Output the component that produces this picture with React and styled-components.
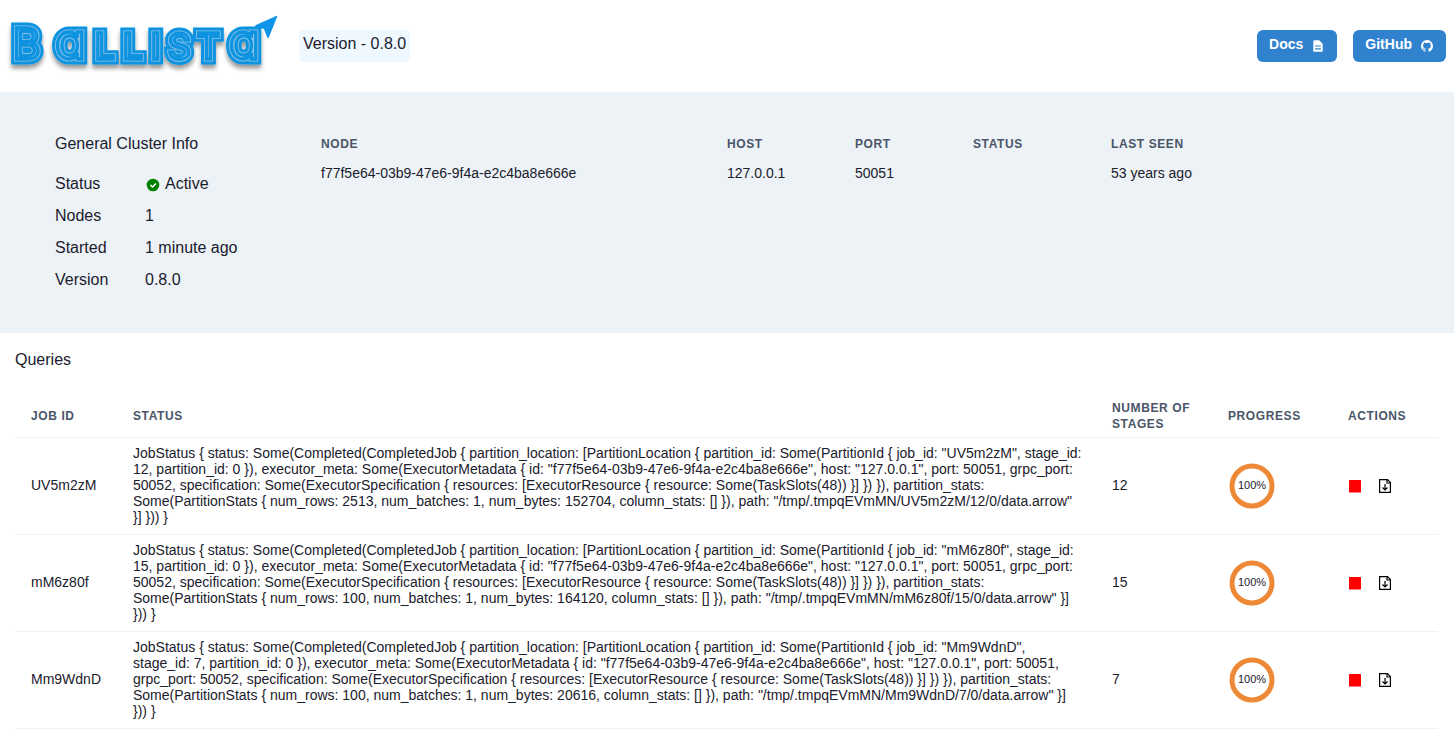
import React from "react";
import styled, { createGlobalStyle } from "styled-components";
import { VscGithubInverted } from "react-icons/vsc";

const Global = createGlobalStyle`
  *, *::before, *::after { box-sizing: border-box; }
  body {
    margin: 0;
    background: #fff;
    color: #1a202c;
    font: 16px/24px "Liberation Sans", Arial, sans-serif;
  }
`;

const Header = styled.header`
  display: flex;
  align-items: center;
  height: 92px;
  padding: 0 8px;
`;

const Logo = styled.svg`
  flex: none;
  margin-right: 15px;
  overflow: visible;
`;

const LogoText = styled.text`
  font-family: Inter, sans-serif;
  font-weight: 400;
  font-feature-settings: "cv11";
  fill: ${(p) => p.$fill};
  stroke: ${(p) => p.$stroke};
  stroke-width: ${(p) => p.$width}px;
`;

const VersionTag = styled.div`
  height: 32px;
  padding: 2px 4px;
  border-radius: 4px;
  background: #f0f8ff;
`;

const Links = styled.nav`
  display: flex;
  gap: 16px;
  margin-left: auto;
`;

const LinkButton = styled.a`
  display: flex;
  align-items: center;
  gap: 8px;
  height: 32px;
  padding: 0 12px;
  border-radius: 6px;
  background: #3182ce;
  color: #fff;
  font-size: 14px;
  font-weight: 700;
  line-height: 16px;
  text-decoration: none;

  span { padding-bottom: 4px; }
`;

const GithubIcon = styled(VscGithubInverted)`
  width: 14px;
  height: 14px;
  padding: 1px;
`;

const Cluster = styled.section`
  display: grid;
  grid-template-columns: 250px 1fr;
  align-items: start;
  padding: 40px 201px 41px 55px;
  background: #edf2f7;
`;

const Title = styled.h2`
  margin: 0;
  font-size: 16px;
  font-weight: 400;
`;

const Facts = styled.dl`
  display: grid;
  grid-template-columns: 90px 1fr;
  row-gap: 8px;
  margin: 16px 0 0;

  dd {
    display: flex;
    align-items: center;
    gap: 4px;
    margin: 0;
  }
`;

const Table = styled.table`
  width: 100%;
  border-collapse: collapse;
  font-size: 14px;
  line-height: ${(p) => p.$line}px;
`;

const Th = styled.th`
  width: ${(p) => p.$width || "auto"};
  padding: 4px 16px;
  color: #4a5568;
  font-size: 12px;
  font-weight: 700;
  line-height: 16px;
  letter-spacing: 0.05em;
  text-align: left;
  text-transform: uppercase;
`;

const Td = styled.td`
  padding: 7px 14px 9px 16px;
`;

const WidgetTd = styled.td`
  padding: 8px 16px;
`;

const Queries = styled.section`
  padding: 15px 16px 0 15px;

  ${Table} { margin-top: 24px; }
  ${Th} { padding-bottom: 5px; }
  tr { border-bottom: 1px solid #edf2f7; }
`;

const Ring = styled.svg`
  display: block;
`;

const Actions = styled.div`
  display: flex;
  gap: 16px;
`;

const IconButton = styled.button`
  display: block;
  padding: 0;
  border: 0;
  background: none;
  cursor: pointer;

  svg { display: block; }
`;

const blue = "#0d93e0";
const pale = "#8cc2e6";

const layers = [
  { width: 11, stroke: blue, fill: blue },
  { width: 5, stroke: pale, fill: pale },
  { width: 3.3, stroke: blue, fill: pale },
];

function BallistaLogo() {
  return (
    <Logo width="276" height="72" viewBox="0 0 276 72" role="img" aria-label="Ballista">
      <defs>
        <filter id="shadow" x="-10%" y="-20%" width="120%" height="160%">
          <feDropShadow dx="0" dy="4" stdDeviation="2" floodColor="#000" floodOpacity="0.4" />
        </filter>
      </defs>
      <g filter="url(#shadow)">
        {layers.map(({ width, stroke, fill }) => (
          <LogoText key={width} $width={width} $stroke={stroke} $fill={fill} x="5 47 87 115 143 160 189 221" y="49">
            <tspan fontSize="42">B</tspan>
            <tspan fontSize="50">a</tspan>
            <tspan fontSize="35" fontWeight="500">LLIST</tspan>
            <tspan fontSize="50">a</tspan>
          </LogoText>
        ))}
      </g>
      <path d="M248 15 268 6q2-1 1 1l-8 20q-1 2-2 0l-3-8-8-2q-2-1 0-2Z" fill="#0d93e8" />
    </Logo>
  );
}

const FileIcon = () => (
  <svg width="14" height="14" viewBox="0 0 24 24" fill="#fff" aria-hidden="true">
    <path d="M14 2H6a2 2 0 0 0-2 2v16a2 2 0 0 0 2 2h12a2 2 0 0 0 2-2V8l-6-6Zm3 16H7v-2h10v2Zm0-5H7v-2h10v2Z" />
  </svg>
);

const CheckIcon = () => (
  <svg width="16" height="16" viewBox="0 0 16 16" aria-hidden="true">
    <circle cx="8" cy="9" r="6.300" fill="green" />
    <path d="m5.500 9 2 2 3.500-3.500" fill="none" stroke="#fff" strokeWidth="1.500" />
  </svg>
);

const StopIcon = () => (
  <svg width="14" height="16" viewBox="0 0 14 16" aria-hidden="true">
    <rect x="1" y="2" width="12" height="12.500" rx="0.500" fill="red" />
  </svg>
);

const DownloadIcon = () => (
  <svg width="14" height="16" viewBox="0 0 14 16" fill="none" stroke="#000" aria-hidden="true">
    <path d="M1.600 1.600h8l2.800 2.800v10H1.600ZM9 1.500v3.500h3.500" strokeWidth="1.200" />
    <path d="M7 6v6M4.500 9.500 7 12l2.500-2.500" strokeWidth="1.200" />
  </svg>
);

const Progress = ({ value }) => (
  <Ring width="48" height="48" viewBox="0 0 48 48" role="img" aria-label={`${value}%`}>
    <circle cx="24" cy="24" r="20" fill="none" stroke="#ed8936" strokeWidth="5" />
    <text x="24" y="27" textAnchor="middle" fontSize="11" fill="#1a202c">{value}%</text>
  </Ring>
);

const executor = "f77f5e64-03b9-47e6-9f4a-e2c4ba8e666e";

const queries = [
  { id: "UV5m2zM", stages: 12, rows: 2513, bytes: 152704 },
  { id: "mM6z80f", stages: 15, rows: 100, bytes: 164120 },
  { id: "Mm9WdnD", stages: 7, rows: 100, bytes: 20616 },
];

const jobStatus = ({ id, stages, rows, bytes }) =>
  `JobStatus { status: Some(Completed(CompletedJob { partition_location: [PartitionLocation { partition_id: Some(PartitionId { job_id: "${id}", stage_id: ${stages}, partition_id: 0 }), executor_meta: Some(ExecutorMetadata { id: "${executor}", host: "127.0.0.1", port: 50051, grpc_port: 50052, specification: Some(ExecutorSpecification { resources: [ExecutorResource { resource: Some(TaskSlots(48)) }] }) }), partition_stats: Some(PartitionStats { num_rows: ${rows}, num_batches: 1, num_bytes: ${bytes}, column_stats: [] }), path: "/tmp/.tmpqEVmMN/${id}/${stages}/0/data.arrow" }] })) }`;

export default function App() {
  return (
    <>
      <Global />
      <Header>
        <BallistaLogo />
        <VersionTag>Version - 0.8.0</VersionTag>
        <Links>
          <LinkButton href="#docs"><span>Docs</span><FileIcon /></LinkButton>
          <LinkButton href="#github"><span>GitHub</span><GithubIcon aria-hidden="true" /></LinkButton>
        </Links>
      </Header>
      <main>
        <Cluster>
          <div>
            <Title>General Cluster Info</Title>
            <Facts>
              <dt>Status</dt><dd><CheckIcon />Active</dd>
              <dt>Nodes</dt><dd>1</dd>
              <dt>Started</dt><dd>1 minute ago</dd>
              <dt>Version</dt><dd>0.8.0</dd>
            </Facts>
          </div>
          <Table $line={20}>
            <thead>
              <tr>
                <Th $width="406px">Node</Th>
                <Th $width="128px">Host</Th>
                <Th $width="118px">Port</Th>
                <Th $width="138px">Status</Th>
                <Th>Last seen</Th>
              </tr>
            </thead>
            <tbody>
              <tr><Td>{executor}</Td><Td>127.0.0.1</Td><Td>50051</Td><Td /><Td>53 years ago</Td></tr>
            </tbody>
          </Table>
        </Cluster>
        <Queries>
          <Title>Queries</Title>
          <Table $line={16}>
            <thead>
              <tr>
                <Th $width="102px">Job ID</Th>
                <Th>Status</Th>
                <Th $width="116px">Number of stages</Th>
                <Th $width="120px">Progress</Th>
                <Th $width="106px">Actions</Th>
              </tr>
            </thead>
            <tbody>
              {queries.map((query) => (
                <tr key={query.id}>
                  <Td>{query.id}</Td>
                  <Td>{jobStatus(query)}</Td>
                  <Td>{query.stages}</Td>
                  <WidgetTd><Progress value={100} /></WidgetTd>
                  <WidgetTd>
                    <Actions>
                      <IconButton aria-label="Stop query"><StopIcon /></IconButton>
                      <IconButton aria-label="Download result"><DownloadIcon /></IconButton>
                    </Actions>
                  </WidgetTd>
                </tr>
              ))}
            </tbody>
          </Table>
        </Queries>
      </main>
    </>
  );
}
